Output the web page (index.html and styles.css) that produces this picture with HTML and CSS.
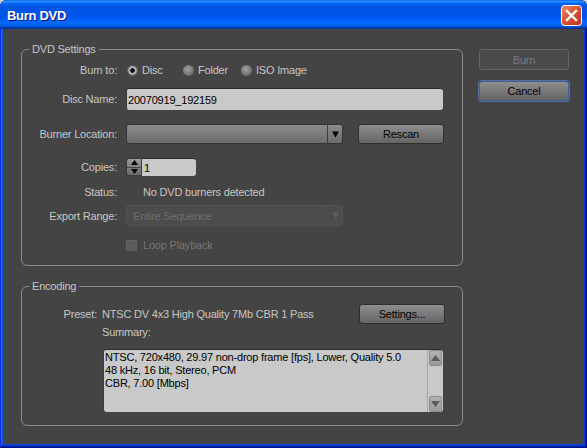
FILE: index.html
```html
<!DOCTYPE html>
<html>
<head>
<meta charset="utf-8">
<title>Burn DVD</title>
<link rel="stylesheet" href="styles.css">
</head>
<body>
<div class="window">
  <div class="titlebar">
    <span class="title">Burn DVD</span>
    <span class="close">
      <svg width="21" height="21" viewBox="0 0 21 21">
        <defs>
          <linearGradient id="cg" x1="0" y1="0" x2="1" y2="1">
            <stop offset="0" stop-color="#f08a6c"/>
            <stop offset="0.5" stop-color="#d9502c"/>
            <stop offset="1" stop-color="#b8321a"/>
          </linearGradient>
        </defs>
        <rect x="0.5" y="0.5" width="20" height="20" rx="3" fill="url(#cg)" stroke="#ffffff" stroke-width="1"/>
        <path d="M6 6 L15 15 M15 6 L6 15" stroke="#ffffff" stroke-width="2.4" stroke-linecap="square"/>
      </svg>
    </span>
  </div>
  <div class="client">
    <div class="main">
      <div class="group dvd">
        <span class="group-title">DVD Settings</span>

        <div class="row r-burn">
          <span class="label">Burn to:</span>
          <div class="ctl radios">
            <span class="opt opt-disc"><span class="radio on"></span><span class="rtext">Disc</span></span>
            <span class="opt opt-folder"><span class="radio"></span><span class="rtext">Folder</span></span>
            <span class="opt"><span class="radio"></span><span class="rtext">ISO Image</span></span>
          </div>
        </div>

        <div class="row r-name">
          <span class="label">Disc Name:</span>
          <div class="ctl"><span class="field name-field">20070919_192159</span></div>
        </div>

        <div class="row r-burner">
          <span class="label">Burner Location:</span>
          <div class="ctl">
            <span class="combo">
              <span class="combo-text"></span>
              <span class="combo-arrow"><svg width="7" height="7" viewBox="0 0 7 7"><polygon points="0,0.5 7,0.5 3.5,6.5" fill="#000"/></svg></span>
            </span>
            <span class="btn rescan">Rescan</span>
          </div>
        </div>

        <div class="row r-copies">
          <span class="label">Copies:</span>
          <div class="ctl">
            <span class="spinner">
              <span class="spin-up"><svg width="7" height="5" viewBox="0 0 7 5"><polygon points="3.5,0 7,5 0,5" fill="#000"/></svg></span>
              <span class="spin-down"><svg width="7" height="5" viewBox="0 0 7 5"><polygon points="0,0 7,0 3.5,5" fill="#000"/></svg></span>
            </span>
            <span class="field copies-field">1</span>
          </div>
        </div>

        <div class="row r-status">
          <span class="label">Status:</span>
          <div class="ctl"><span class="status">No DVD burners detected</span></div>
        </div>

        <div class="row r-export">
          <span class="label">Export Range:</span>
          <div class="ctl">
            <span class="combo disabled">
              <span class="combo-text">Entire Sequence</span>
              <span class="combo-arrow"><svg width="7" height="7" viewBox="0 0 7 7"><polygon points="0,0.5 7,0.5 3.5,6.5" fill="#5c5c5c"/></svg></span>
            </span>
          </div>
        </div>

        <div class="row r-loop">
          <span class="label"></span>
          <div class="ctl"><span class="checkbox"></span><span class="loop-text">Loop Playback</span></div>
        </div>
      </div>

      <div class="group enc">
        <span class="group-title">Encoding</span>
        <div class="row r-preset">
          <span class="label">Preset:</span>
          <div class="ctl">
            <span class="preset-value">NTSC DV 4x3 High Quality 7Mb CBR 1 Pass</span>
            <span class="btn settings">Settings...</span>
          </div>
        </div>
        <div class="row r-summary">
          <span class="label"></span>
          <div class="ctl"><span>Summary:</span></div>
        </div>
        <div class="summary-box">
          <div class="summary-text">NTSC, 720x480, 29.97 non-drop frame [fps], Lower, Quality 5.0<br>48 kHz, 16 bit, Stereo, PCM<br>CBR, 7.00 [Mbps]</div>
          <div class="scroll">
            <span class="sbtn"><svg width="9" height="6" viewBox="0 0 9 6"><polygon points="4.5,0 9,6 0,6" fill="#5a5a5a"/></svg></span>
            <span class="sbtn"><svg width="9" height="6" viewBox="0 0 9 6"><polygon points="0,0 9,0 4.5,6" fill="#5a5a5a"/></svg></span>
          </div>
        </div>
      </div>
    </div>

    <div class="side">
      <span class="btn big disabled">Burn</span>
      <span class="btn big focus">Cancel</span>
    </div>
  </div>
</div>
</body>
</html>
```

FILE: styles.css
```css
* { box-sizing: border-box; }
html, body { margin: 0; padding: 0; }
body {
  width: 587px;
  height: 448px;
  overflow: hidden;
  background: #d4d0c8;
  font-family: "Liberation Sans", Arial, sans-serif;
  font-size: 11px;
  letter-spacing: -0.2px;
  color: #c6c6c6;
}

.window {
  width: 587px;
  height: 448px;
  display: flex;
  flex-direction: column;
  background: #0a46d8;
  border-radius: 7px 7px 0 0;
  box-shadow: inset -1px -1px #00138c, inset 1px 1px #0831d9, inset -2px -2px #001ea0, inset 2px 2px #166aee, inset -3px -3px #003bda, inset 3px 3px #0855dd;
}

.titlebar {
  height: 29px;
  flex: none;
  display: flex;
  align-items: center;
  justify-content: space-between;
  padding: 0 5px 0 7px;
  border-radius: 7px 7px 0 0;
  background: linear-gradient(to bottom, #0058ee 0%, #3a93ff 4%, #288eff 6%, #127dff 8%, #036ffc 10%, #0262ee 14%, #0057e5 20%, #0054e3 24%, #0055eb 56%, #005bf5 66%, #026afe 76%, #0062ef 86%, #0052d6 92%, #0040ab 94%, #003092 100%);
}
.title {
  color: #fff;
  font-weight: bold;
  font-size: 13px;
  letter-spacing: -0.3px;
  text-shadow: 1px 1px #0f1089;
  margin-top: 1px;
}
.close { display: flex; width: 21px; height: 21px; margin-top: 1px; }

.client {
  flex: 1;
  display: flex;
  align-items: flex-start;
  margin: 0 4px 4px 3px;
  padding: 20px 0 0 18px;
  background: #444444;
}

.main { width: 442px; display: flex; flex-direction: column; }

.group {
  position: relative;
  border: 1px solid #8a8a8a;
  border-radius: 6px;
}
.dvd { height: 217px; }
.enc { height: 140px; margin-top: 20px; }
.group-title {
  position: absolute;
  top: -7px;
  left: 7px;
  padding: 0 3px;
  line-height: 13px;
  background: #444444;
  color: #c6c6c6;
}

.row {
  display: grid;
  grid-template-columns: 95px 1fr;
  column-gap: 9px;
  align-items: center;
}
.label { text-align: right; white-space: nowrap; }
.ctl { display: flex; align-items: center; white-space: nowrap; }

.r-burn { margin-top: 11px; height: 18px; }
.r-name { margin-top: 9px; height: 22px; }
.r-burner { margin-top: 14px; height: 20px; }
.r-copies { margin-top: 14px; height: 18px; }
.r-status { margin-top: 8px; height: 16px; }
.r-export { margin-top: 5px; height: 21px; }
.r-loop { margin-top: 11px; height: 16px; }

/* radios */
.opt { display: flex; align-items: center; }
.opt-disc { width: 57px; padding-left: 1px; }
.opt-folder { width: 58px; }
.radio {
  width: 11px;
  height: 11px;
  border-radius: 50%;
  background: radial-gradient(circle at 45% 40%, #9e9e9e 0, #8a8a8a 3px, #6c6c6c 6px);
}
.radio.on {
  background: radial-gradient(circle, #0d0d0d 0, #0d0d0d 2px, #bdbdbd 2.6px, #b4b4b4 3.6px, #6e6e6e 4.6px, #5a5a5a 5.5px);
}
.rtext { margin-left: 4px; }

/* fields */
.field {
  display: flex;
  align-items: center;
  background: #c9c9c9;
  color: #000;
  border-top: 1px solid #2c2c2c;
  border-left: 1px solid #3a3a3a;
}
.name-field {
  width: 317px;
  height: 22px;
  padding-left: 1px;
  border-radius: 3px;
}

/* combo */
.combo {
  width: 217px;
  height: 20px;
  display: flex;
  border: 1px solid #353535;
  border-radius: 3px;
  background: linear-gradient(to bottom, #8c8c8c, #6c6c6c);
}
.combo-text { flex: 1; display: flex; align-items: center; padding-left: 6px; }
.combo-arrow {
  width: 15px;
  display: flex;
  align-items: center;
  justify-content: center;
  border-left: 1px solid #3c3c3c;
}
.combo.disabled {
  height: 21px;
  background: #4c4c4c;
  border-color: #525252;
  color: #6e6e6e;
}
.combo.disabled .combo-arrow { border-left-color: #505050; }

/* buttons */
.btn {
  display: flex;
  align-items: center;
  justify-content: center;
  height: 20px;
  color: #000;
  border: 1px solid #2e2e2e;
  border-radius: 3px;
  background: linear-gradient(to bottom, #8e8e8e, #656565);
}
.rescan { width: 86px; margin-left: 15px; }
.settings { width: 86px; margin-left: auto; margin-right: 17px; }

/* spinner */
.spinner {
  width: 16px;
  height: 18px;
  display: flex;
  flex-direction: column;
  border: 1px solid #3a3a3a;
  border-radius: 3px 0 0 3px;
  background: linear-gradient(to bottom, #9a9a9a, #6a6a6a);
}
.spin-up, .spin-down {
  flex: 1;
  display: flex;
  align-items: center;
  justify-content: center;
}
.spin-up { border-bottom: 1px solid #4a4a4a; }
.copies-field {
  width: 54px;
  height: 18px;
  padding-left: 2px;
  border-radius: 0 3px 3px 0;
  border-left: none;
}

.status { margin-left: 17px; }

/* checkbox */
.checkbox {
  width: 11px;
  height: 11px;
  background: #5a5a5a;
  border: 1px solid #626262;
}
.loop-text { margin-left: 6px; color: #767676; }

/* encoding */
.enc .row { grid-template-columns: 75px 1fr; column-gap: 5px; }
.r-preset { margin-top: 17px; height: 20px; }
.r-summary { margin-top: 1px; height: 14px; }

.summary-box {
  margin: 10px 0 0 81px;
  width: 340px;
  height: 63px;
  display: flex;
  background: #c9c9c9;
  border-top: 1px solid #2c2c2c;
  border-left: 1px solid #3a3a3a;
  border-radius: 3px;
}
.summary-text {
  flex: 1;
  color: #000;
  line-height: 13px;
  padding: 1px 0 0 1px;
  white-space: nowrap;
}
.scroll {
  width: 16px;
  display: flex;
  flex-direction: column;
  justify-content: space-between;
  padding: 0 1px 0 1px;
  border-left: 1px solid #a9a9a9;
}
.sbtn {
  height: 16px;
  display: flex;
  align-items: center;
  justify-content: center;
  border: 1px solid #8c8c8c;
  border-radius: 2px;
  background: linear-gradient(to bottom, #b2b2b2, #9a9a9a);
}

/* side buttons */
.side {
  margin-left: 16px;
  display: flex;
  flex-direction: column;
}
.big { width: 90px; height: 21px; }
.btn.disabled {
  background: #4a4a4a;
  border-color: #646464;
  color: #7a7a7a;
}
.btn.focus {
  margin-top: 11px;
  height: 20px;
  border-color: #3e5f9c;
  box-shadow: 0 0 0 1px rgba(96, 136, 210, 0.65);
}
```
